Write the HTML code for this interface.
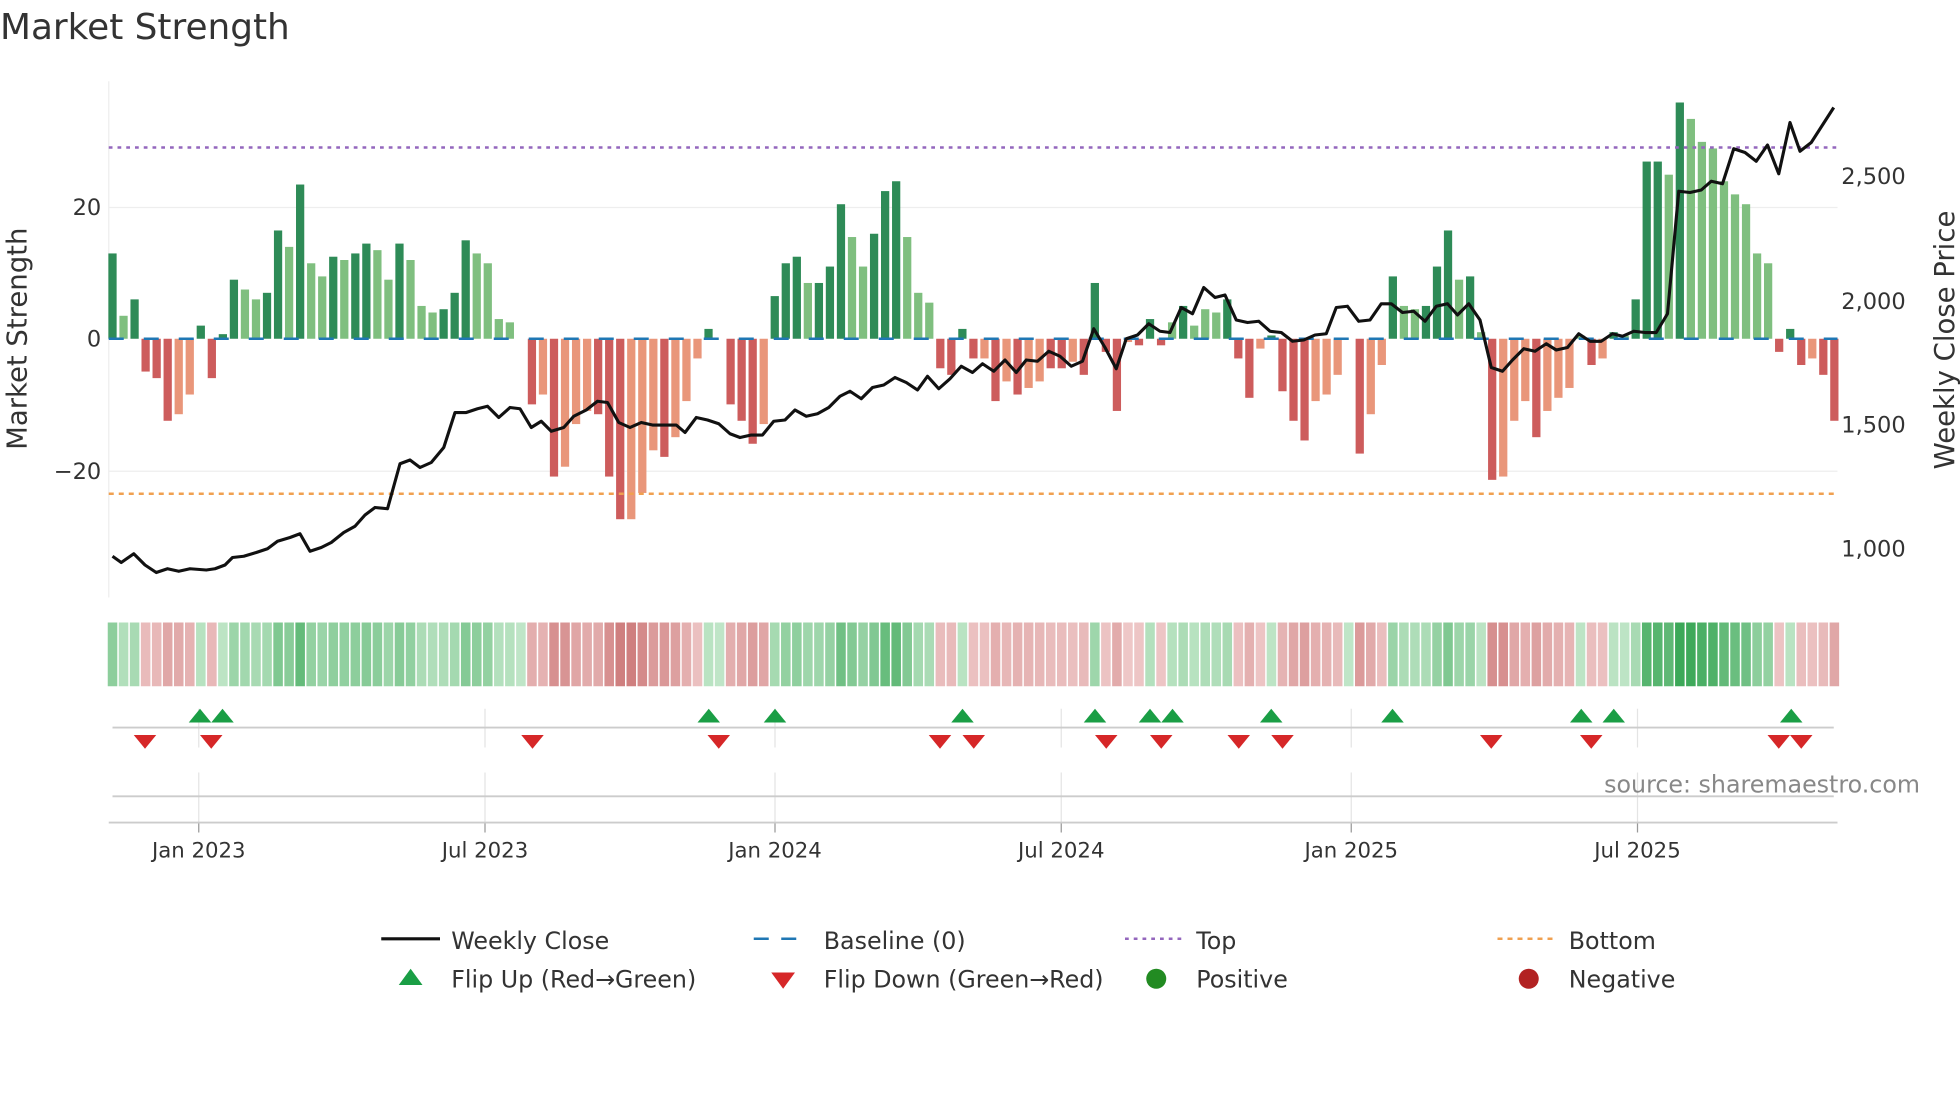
<!DOCTYPE html>
<html><head><meta charset="utf-8"><style>
html,body{margin:0;padding:0;background:#fff;}
svg{display:block;font-family:"DejaVu Sans","Liberation Sans",sans-serif;}
</style></head><body>
<svg id="s" width="1960" height="1102" viewBox="0 0 1568 881.6" xmlns="http://www.w3.org/2000/svg">
<text x="0" y="31" font-size="28.7" fill="#333">Market Strength</text>
<g id="grid">
<line x1="87" y1="65" x2="87" y2="478" stroke="#eee" stroke-width="1"/>
<line x1="87" y1="166" x2="1470" y2="166" stroke="#eee"/>
<line x1="87" y1="377" x2="1470" y2="377" stroke="#eee"/>
</g>
<g font-size="18" fill="#333">
<text x="81" y="172" text-anchor="end">20</text>
<text x="81" y="277" text-anchor="end">0</text>
<text x="81" y="383" text-anchor="end">−20</text>
<text x="1473" y="147">2,500</text>
<text x="1473" y="247">2,000</text>
<text x="1473" y="346">1,500</text>
<text x="1473" y="445">1,000</text>
</g>
<text transform="translate(21,271) rotate(-90)" text-anchor="middle" font-size="22" fill="#333">Market Strength</text>
<text transform="translate(1563,272) rotate(-90)" text-anchor="middle" font-size="22" fill="#333">Weekly Close Price</text>
<g id="bars"></g>
<line x1="87" y1="271" x2="1470" y2="271" stroke="#1f77b4" stroke-width="2" stroke-dasharray="12,16"/>
<line x1="87" y1="118" x2="1470" y2="118" stroke="#9467bd" stroke-width="2" stroke-dasharray="3,4"/>
<line x1="87" y1="395" x2="1470" y2="395" stroke="#f0a050" stroke-width="2" stroke-dasharray="4,4"/>
<polyline id="price" fill="none" stroke="#111" stroke-width="2.5" stroke-linejoin="round"/>
<g id="heat"></g>
<g id="flipgrid" stroke="#e4e4e4"></g>
<line x1="90" y1="582" x2="1467" y2="582" stroke="#ccc" stroke-width="1.5"/>
<line x1="90" y1="637" x2="1467" y2="637" stroke="#ccc" stroke-width="1.5"/>
<line x1="87" y1="658" x2="1470" y2="658" stroke="#ccc" stroke-width="1.5"/>
<g id="flips"></g>
<g font-size="17" fill="#333" text-anchor="middle">
<text x="159" y="686">Jan 2023</text>
<text x="388" y="686">Jul 2023</text>
<text x="620" y="686">Jan 2024</text>
<text x="849" y="686">Jul 2024</text>
<text x="1081" y="686">Jan 2025</text>
<text x="1310" y="686">Jul 2025</text>
</g>
<text x="1536" y="634" text-anchor="end" font-size="19" fill="#888">source: sharemaestro.com</text>
<g font-size="19" fill="#333">
<line x1="305" y1="751" x2="352" y2="751" stroke="#111" stroke-width="2.5"/>
<text x="361" y="759">Weekly Close</text>
<line x1="603" y1="751" x2="646" y2="751" stroke="#1f77b4" stroke-width="2" stroke-dasharray="12,10"/>
<text x="659" y="759">Baseline (0)</text>
<line x1="900" y1="751" x2="945" y2="751" stroke="#9467bd" stroke-width="2" stroke-dasharray="3,4"/>
<text x="957" y="759">Top</text>
<line x1="1198" y1="751" x2="1243" y2="751" stroke="#f0a050" stroke-width="2" stroke-dasharray="4,4"/>
<text x="1255" y="759">Bottom</text>
<polygon points="319,788 338,788 328.5,775" fill="#1a9e45"/>
<text x="361" y="790">Flip Up (Red→Green)</text>
<polygon points="617,778 636,778 626.5,791" fill="#d62728"/>
<text x="659" y="790">Flip Down (Green→Red)</text>
<circle cx="925" cy="783" r="8" fill="#228b22"/>
<text x="957" y="790">Positive</text>
<circle cx="1223" cy="783" r="8" fill="#b22222"/>
<text x="1255" y="790">Negative</text>
</g>
</svg>
<script>
var NS="http://www.w3.org/2000/svg";
function el(t,a,p){var e=document.createElementNS(NS,t);for(var k in a)e.setAttribute(k,a[k]);document.getElementById(p).appendChild(e);return e;}
var d="13d 3.5l 6d -5d -6d -12.5d -11.5l -8.5l 2d -6d 0.7d 9d 7.5l 6l 7d 16.5d 14l 23.5d 11.5l 9.5l 12.5d 12l 13d 14.5d 13.5l 9l 14.5d 12l 5l 4l 4.5d 7d 15d 13l 11.5l 3l 2.5l 0l -10d -8.5l -21d -19.5l -13l -11l -11.5d -21d -27.5d -27.5l -23.5l -17l -18d -15l -9.5l -3l 1.5d 0l -10d -12.5d -16d -13l 6.5d 11.5d 12.5d 8.5l 8.5d 11d 20.5d 15.5l 11l 16d 22.5d 24d 15.5l 7l 5.5l -4.5d -5.5d 1.5d -3d -3l -9.5d -6.5l -8.5d -7.5l -6.5l -4.5d -4.5d -3.5l -5.5d 8.5d -2d -11d -0.5l -1d 3d -1d 2.5l 5d 2l 4.5l 4l 6d -3d -9d -1.5l 0.5d -8d -12.5d -15.5d -9.5l -8.5l -5.5l 0l -17.5d -11.5l -4l 9.5d 5l 4.5l 5d 11d 16.5d 9l 9.5d 1l -21.5d -21l -12.5l -9.5l -15d -11l -9l -7.5l 0.5l -4d -3l 1d 0.5l 6d 27d 27d 25l 36d 33.5l 30l 29l 24l 22l 20.5l 13l 11.5l -2d 1.5d -4d -3l -5.5d -12.5d".split(" ");
var sp=8.83;
for(var i=0;i<d.length;i++){
 var v=parseFloat(d[i]),dk=d[i].slice(-1)=="d",x=90+i*sp;
 var h=Math.abs(v)*5.25,y=v>=0?271-h:271;
 var c=v>=0?(dk?"#2e8b57":"#7fbf7f"):(dk?"#cd5c5c":"#e9967a");
 if(h>0.1)el("rect",{x:x-3.3,y:y,width:6.6,height:h,fill:c},"bars");
 var t=Math.min(1,Math.abs(v)/34),col;
 if(v>=0){var a=[214,240,218],b=[60,168,88];}else{var a=[245,216,216],b=[200,110,110];}
 col="rgb("+[0,1,2].map(function(j){return Math.round(a[j]+(b[j]-a[j])*(0.15+0.85*t));}).join(",")+")";
 el("rect",{x:x-4.4+0.6,y:498,width:sp-1.2,height:51,fill:col},"heat");
}
var P="90,445 97,450 107,443 116,452 125,458 134,455 143,457 152,455 165,456 172,455 180,452 186,446 195,445 205,442 214,439 222,433 232,430 240,427 248,441 257,438 265,434 275,426 284,421 292,412 300,406 310,407 320,371 328,368 336,374 345,370 355,358 364,330 373,330 382,327 390,325 399,334 408,326 416,327 425,342 433,337 441,345 451,342 459,333 469,328 478,321 486,322 495,338 504,342 513,338 522,340 530,340 541,340 548,346 557,334 566,336 575,339 584,347 592,350 601,348 610,348 619,337 628,336 636,328 645,333 654,331 663,326 672,317 680,313 689,319 698,310 707,308 716,302 725,306 734,312 742,301 751,311 760,303 769,293 778,298 786,291 795,297 804,288 813,298 821,288 830,289 839,281 848,285 857,293 866,289 875,263 884,278 893,295 901,271 910,268 919,259 928,265 936,266 945,246 954,251 963,230 972,238 980,236 989,256 998,258 1007,257 1016,265 1025,266 1034,273 1043,272 1052,268 1061,267 1069,246 1078,245 1087,257 1096,256 1105,243 1113,243 1122,250 1131,249 1140,257 1149,245 1158,243 1166,252 1175,243 1184,256 1193,294 1202,297 1210,288 1219,279 1228,281 1237,275 1245,280 1254,278 1263,267 1272,273 1281,273 1290,267 1298,269 1307,265 1316,266 1325,266 1334,251 1343,153 1352,154 1361,152 1369,145 1378,147 1387,119 1396,122 1405,129 1414,116 1423,139 1432,98 1440,121 1449,114 1458,100 1467,86";
document.getElementById("price").setAttribute("points",P);
[159,388,620,849,1081,1310].forEach(function(x){el("line",{x1:x,y1:567,x2:x,y2:598},"flipgrid");el("line",{x1:x,y1:618,x2:x,y2:658},"flipgrid");el("line",{x1:x,y1:658,x2:x,y2:666,stroke:"#999"},"flipgrid");});
[160,178,567,620,770,876,920,938,1017,1114,1265,1291,1433].forEach(function(x){el("polygon",{points:(x-9)+",578 "+(x+9)+",578 "+x+",567",fill:"#1a9e45"},"flips");});
[116,169,426,575,752,779,885,929,991,1026,1193,1273,1423,1441].forEach(function(x){el("polygon",{points:(x-9)+",588 "+(x+9)+",588 "+x+",599",fill:"#d62728"},"flips");});
</script>
</body></html>
